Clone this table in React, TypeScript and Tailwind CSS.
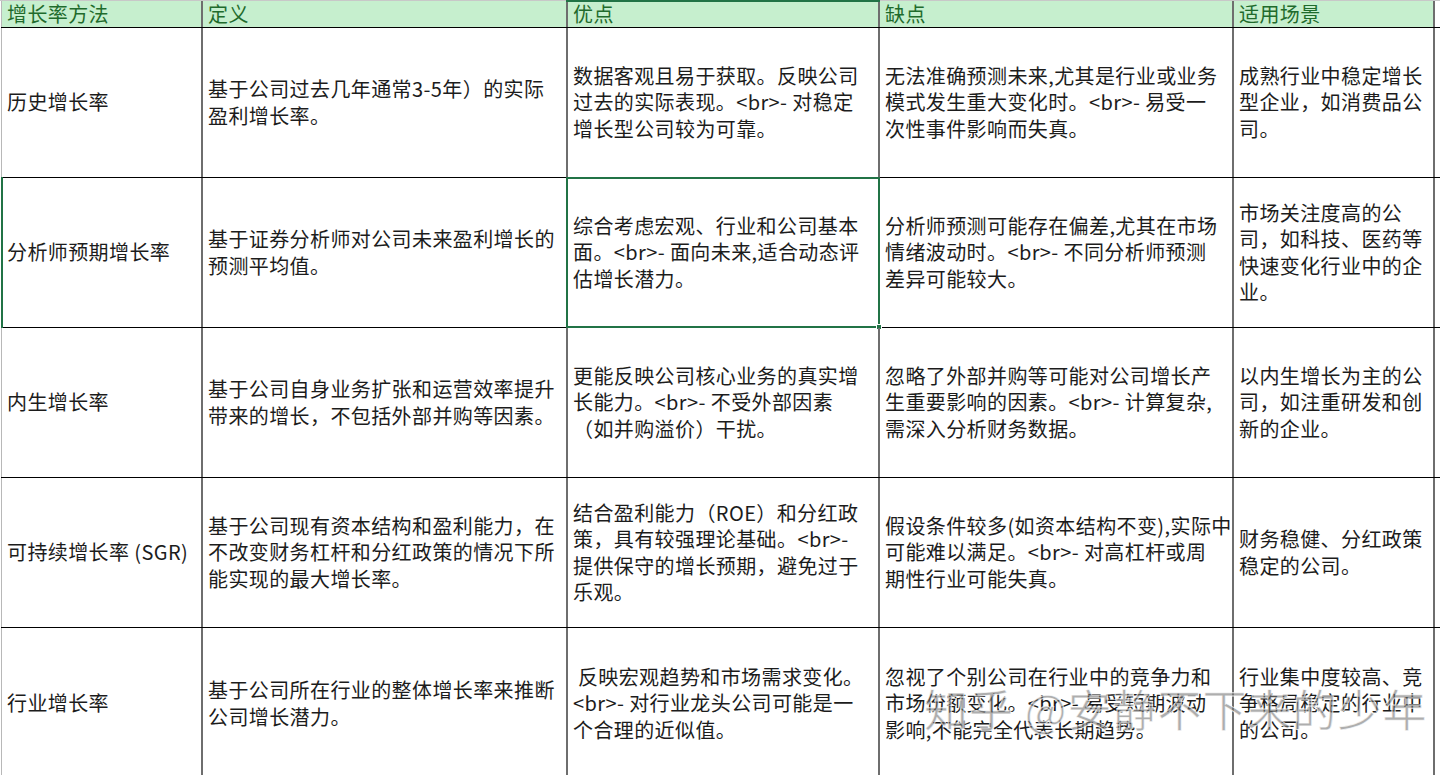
import React from 'react'

const headers = ['增长率方法', '定义', '优点', '缺点', '适用场景']

const widths = ['w-[202px]', 'w-[365px]', 'w-[312px]', 'w-[354px]', 'w-[201px]']

const rows: string[][][] = [
  [
    ['历史增长率'],
    ['基于公司过去几年通常3-5年）的实际', '盈利增长率。'],
    ['数据客观且易于获取。反映公司', '过去的实际表现。<br>- 对稳定', '增长型公司较为可靠。'],
    ['无法准确预测未来,尤其是行业或业务', '模式发生重大变化时。<br>- 易受一', '次性事件影响而失真。'],
    ['成熟行业中稳定增长', '型企业，如消费品公', '司。'],
  ],
  [
    ['分析师预期增长率'],
    ['基于证券分析师对公司未来盈利增长的', '预测平均值。'],
    ['综合考虑宏观、行业和公司基本', '面。<br>- 面向未来,适合动态评', '估增长潜力。'],
    ['分析师预测可能存在偏差,尤其在市场', '情绪波动时。<br>- 不同分析师预测', '差异可能较大。'],
    ['市场关注度高的公', '司，如科技、医药等', '快速变化行业中的企', '业。'],
  ],
  [
    ['内生增长率'],
    ['基于公司自身业务扩张和运营效率提升', '带来的增长，不包括外部并购等因素。'],
    ['更能反映公司核心业务的真实增', '长能力。<br>- 不受外部因素', '（如并购溢价）干扰。'],
    ['忽略了外部并购等可能对公司增长产', '生重要影响的因素。<br>- 计算复杂,', '需深入分析财务数据。'],
    ['以内生增长为主的公', '司，如注重研发和创', '新的企业。'],
  ],
  [
    ['可持续增长率 (SGR)'],
    ['基于公司现有资本结构和盈利能力，在', '不改变财务杠杆和分红政策的情况下所', '能实现的最大增长率。'],
    ['结合盈利能力（ROE）和分红政', '策，具有较强理论基础。<br>-', '提供保守的增长预期，避免过于', '乐观。'],
    ['假设条件较多(如资本结构不变),实际中', '可能难以满足。<br>- 对高杠杆或周', '期性行业可能失真。'],
    ['财务稳健、分红政策', '稳定的公司。'],
  ],
  [
    ['行业增长率'],
    ['基于公司所在行业的整体增长率来推断', '公司增长潜力。'],
    [' 反映宏观趋势和市场需求变化。', '<br>- 对行业龙头公司可能是一', '个合理的近似值。'],
    ['忽视了个别公司在行业中的竞争力和', '市场份额变化。<br>- 易受短期波动', '影响,不能完全代表长期趋势。'],
    ['行业集中度较高、竞', '争格局稳定的行业中', '的公司。'],
  ],
]

const font = { fontFamily: '"Noto Sans CJK SC", "Noto Sans", sans-serif' }

export default function App() {
  return (
    <div className="relative w-[1440px] h-[775px] overflow-hidden bg-white" style={font}>
      <div className="flex flex-col border-t border-[#c8c8c8] pl-[1px]">
        {/* header */}
        <div className="flex h-[27px] border-b border-black">
          {headers.map((h, i) => (
            <div
              key={h}
              className={`${widths[i]} relative flex items-center pl-[5px] bg-[#c6efce] text-[#1f6b2c] text-[20px] tracking-[0.4px] leading-[26px] border-r-2 border-[#6e6e6e] ${i === 0 ? 'border-l border-l-[#b8b8b8]' : ''}`}
            >
              {i === 2 && <div className="absolute left-[-2px] right-[-2px] top-[-1px] h-[2px] bg-[#217346]" />}
              {h}
            </div>
          ))}
          <div className="flex-1 bg-white" />
        </div>

        {rows.map((row, r) => (
          <div key={r} className={`flex ${r === 4 ? 'h-[152px]' : 'h-[150px]'} border-b border-black`}>
            {row.map((lines, c) => (
              <div
                key={c}
                className={`${widths[c]} relative flex flex-col justify-center pl-[5px] text-[20px] tracking-[0.4px] leading-[26.5px] text-[#1c1c1c] border-r-2 border-[#6e6e6e] ${c === 0 ? 'border-l border-l-[#b8b8b8]' : ''}`}
              >
                {r === 1 && c === 0 && <div className="absolute left-[-1px] top-[-1px] bottom-[-1px] w-[2px] bg-[#217346]" />}
                {r === 1 && c === 2 && (
                  <div className="absolute left-[-2px] right-[-2px] top-[-1px] bottom-[-1px] border-2 border-[#217346]">
                    <div className="absolute right-[-4px] bottom-[-4px] w-[6px] h-[6px] bg-[#217346] border border-white" />
                  </div>
                )}
                {lines.map((l, k) => (
                  <span key={k} className="block whitespace-pre">{l}</span>
                ))}
              </div>
            ))}
            <div className="flex-1 bg-white" />
          </div>
        ))}
      </div>

      {/* watermark */}
      <div
        className="absolute left-[924px] top-[680px] text-[44px] leading-[56px] whitespace-nowrap text-[rgba(120,120,120,0.6)] tracking-[1px]"
        style={{ WebkitTextStroke: '1px rgba(255,255,255,0.75)' }}
      >
        知乎 @安静不下来的少年
      </div>
    </div>
  )
}
